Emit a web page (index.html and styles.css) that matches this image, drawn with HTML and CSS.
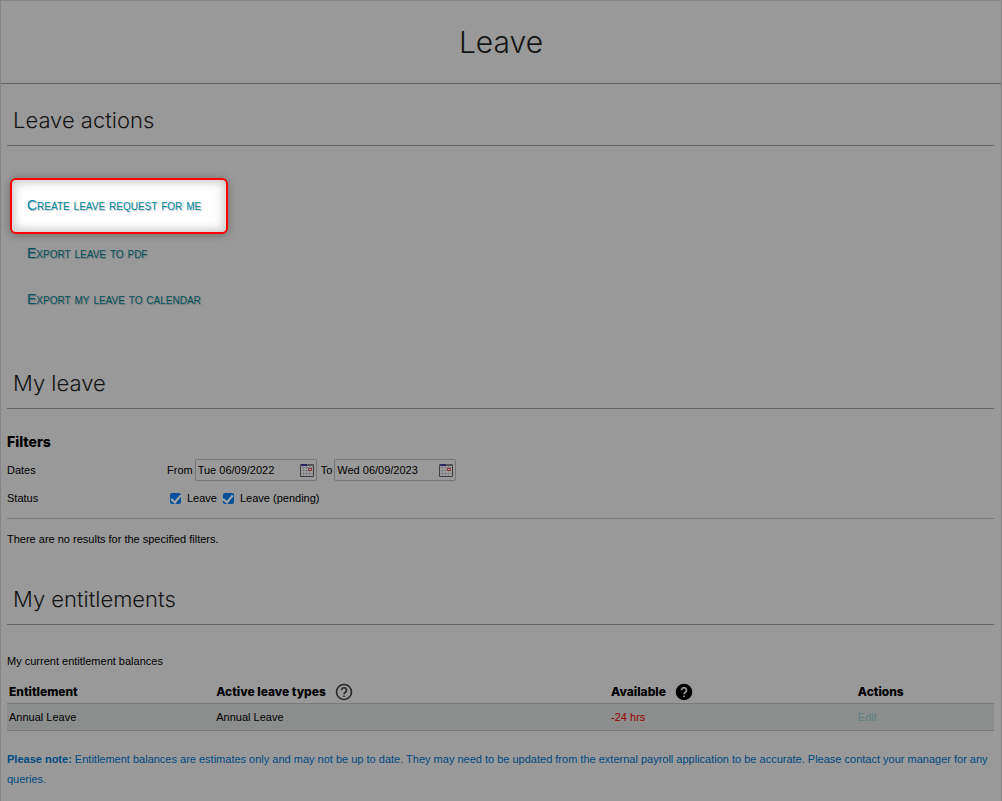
FILE: index.html
```html
<!DOCTYPE html>
<html lang="en">
<head>
    <meta charset="UTF-8">
    <title>Leave</title>
    <link rel="stylesheet" href="styles.css">
</head>
<body>
<div class="page">
    <header class="page-header">
        <h1>Leave</h1>
    </header>

    <main class="content">
        <section>
            <h2>Leave actions</h2>
            <ul class="actions">
                <li class="highlight"><a href="#">Create leave request for me</a></li>
                <li><a href="#">Export leave to pdf</a></li>
                <li><a href="#">Export my leave to calendar</a></li>
            </ul>
        </section>

        <section class="my-leave">
            <h2>My leave</h2>
            <form class="filters">
                <h3>Filters</h3>
                <div class="filter-row">
                    <span class="filter-name">Dates</span>
                    <label for="from">From</label>
                    <span class="date-box">
                        <input type="text" id="from" value="Tue 06/09/2022">
                        <button type="button" aria-label="Pick from date">
                            <svg width="14" height="13" viewBox="0 0 14 13">
                                <path d="M0 0h14v13H0z" fill="#a09fa1"/>
                                <path d="M1 3.5h12M1 6.5h12M1 9.5h12M3.5 2v10M6.5 2v10M9.5 2v10" stroke="#858387"/>
                                <path d="M.5 0v12.500h13V0" fill="none" stroke="#3f3c40"/>
                                <path d="M0 1h14" stroke="#555" stroke-width="2"/>
                                <path d="M1 1h6" stroke="#29295f" stroke-width="2"/>
                                <path d="M8.500 4.500h3v2h-3z" fill="#aaa" stroke="#8b2c2c"/>
                            </svg>
                        </button>
                    </span>
                    <label for="to">To</label>
                    <span class="date-box">
                        <input type="text" id="to" value="Wed 06/09/2023">
                        <button type="button" aria-label="Pick to date">
                            <svg width="14" height="13" viewBox="0 0 14 13">
                                <path d="M0 0h14v13H0z" fill="#a09fa1"/>
                                <path d="M1 3.5h12M1 6.5h12M1 9.5h12M3.5 2v10M6.5 2v10M9.5 2v10" stroke="#858387"/>
                                <path d="M.5 0v12.500h13V0" fill="none" stroke="#3f3c40"/>
                                <path d="M0 1h14" stroke="#555" stroke-width="2"/>
                                <path d="M1 1h6" stroke="#29295f" stroke-width="2"/>
                                <path d="M8.500 4.500h3v2h-3z" fill="#aaa" stroke="#8b2c2c"/>
                            </svg>
                        </button>
                    </span>
                </div>
                <div class="filter-row status-row">
                    <span class="filter-name">Status</span>
                    <input type="checkbox" id="leave" checked>
                    <label for="leave">Leave</label>
                    <input type="checkbox" id="pending" checked>
                    <label for="pending">Leave (pending)</label>
                </div>
            </form>
            <p class="results">There are no results for the specified filters.</p>
        </section>

        <section class="my-entitlements">
            <h2>My entitlements</h2>
            <table class="balances">
                <caption>My current entitlement balances</caption>
                <thead>
                <tr>
                    <th class="col-entitlement">Entitlement</th>
                    <th class="col-types">
                        <div class="with-help">Active leave types
                            <svg width="18" height="18" viewBox="0 0 18 18">
                                <circle cx="9" cy="9" r="7.500" fill="none" stroke="#262626" stroke-width="1.600"/>
                                <path d="M6.500 7.200a2.500 2.500 0 1 1 3.900 2.100C9.400 10 9 10.300 9 11.300" fill="none" stroke="#262626" stroke-width="1.600"/>
                                <path d="M8.200 12.400h1.600V14H8.200z" fill="#262626"/>
                            </svg>
                        </div>
                    </th>
                    <th class="col-available">
                        <div class="with-help">Available
                            <svg width="18" height="18" viewBox="0 0 18 18">
                                <circle cx="9" cy="9" r="8.300" fill="#000"/>
                                <path d="M6.500 7.200a2.500 2.500 0 1 1 3.900 2.100C9.400 10 9 10.300 9 11.300" fill="none" stroke="#999" stroke-width="1.700"/>
                                <path d="M8.200 12.600h1.600v1.600H8.200z" fill="#999"/>
                            </svg>
                        </div>
                    </th>
                    <th>Actions</th>
                </tr>
                </thead>
                <tbody>
                <tr>
                    <td>Annual Leave</td>
                    <td>Annual Leave</td>
                    <td class="negative">-24 hrs</td>
                    <td><a href="#">Edit</a></td>
                </tr>
                </tbody>
            </table>
            <p class="note"><strong>Please note:</strong> Entitlement balances are estimates only and may not be up to date. They may need to be updated from the external payroll application to be accurate. Please contact your manager for any queries.</p>
        </section>
    </main>
</div>
</body>
</html>
```
FILE: styles.css
```css
* {
    box-sizing: border-box;
}
body {
    margin: 0;
    background: #999;
    color: #000;
    font-family: "Liberation Sans", Arial, sans-serif;
    font-size: 11px;
    line-height: 20px;
}
.page {
    min-height: 100vh;
    border: 1px solid #858585;
    border-bottom: 0;
}
.page-header {
    padding: 21px 0;
    border-bottom: 1px solid #666;
    text-align: center;
}
h1, h2 {
    margin: 0;
    color: #141414;
    font-family: Inter, sans-serif;
    font-weight: 300;
}
h1 {
    font-size: 30px;
    line-height: 40px;
}
h2 {
    padding: 20px 6px 9px;
    border-bottom: 1px solid #666;
    font-size: 22px;
    line-height: 32px;
}
.content {
    padding: 0 7px 0 6px;
}

/* actions */
.actions {
    margin: 0;
    padding: 32px 3px 0;
    list-style: none;
}
.actions li {
    width: fit-content;
    padding: 8px 17px;
    line-height: 30px;
}
.actions .highlight {
    padding: 10px 25px 11px 15px;
    border: 2px solid #f00;
    border-radius: 6px;
    background: #fff;
    box-shadow: 0 1px 8px rgba(0, 0, 0, .3), inset 0 0 8px 3px #ccc;
}
.actions .highlight + li {
    padding: 4px 17px 7px;
}
.actions a {
    color: #00525f;
    font-size: 14px;
    font-variant: small-caps;
    text-decoration: none;
    text-shadow: 1px 1px 1px #777;
}
.actions .highlight a {
    color: #008ba3;
    text-shadow: 1px 1px 1px #bbb;
}

/* filters */
.my-leave {
    padding-top: 24px;
}
.filters {
    padding: 23px 0 10px;
    border-bottom: 1px solid #7a7a7a;
}
h3 {
    margin: 0;
    font-family: Inter, sans-serif;
    font-size: 14px;
    font-weight: 800;
    line-height: 20px;
}
.filter-row {
    display: flex;
    align-items: center;
    height: 36px;
}
.status-row {
    height: 20px;
}
.filter-name {
    width: 160px;
}
.date-box {
    display: flex;
    align-items: center;
    justify-content: space-between;
    width: 122px;
    height: 22px;
    margin: 0 4px 0 2px;
    padding: 0 2px;
    border: 1px solid #777;
    border-radius: 2px;
}
.date-box input {
    width: 90px;
    padding: 0;
    border: 0;
    background: none;
    color: #000;
    font: inherit;
}
.date-box button {
    display: flex;
    padding: 0;
    border: 0;
    background: none;
}
.status-row input {
    appearance: none;
    display: flex;
    justify-content: center;
    width: 11px;
    height: 11px;
    margin: 0 6px 0 3px;
    border-radius: 2px;
    background: #07509b;
}
.status-row input:checked::after {
    content: "";
    width: 4px;
    height: 8px;
    border: solid #aaa;
    border-width: 0 2px 2px 0;
    transform: rotate(40deg);
}
.status-row label {
    margin-right: 3px;
}
.results {
    margin: 0;
    padding: 10px 0;
}

/* entitlements */
.my-entitlements {
    padding-top: 4px;
}
.balances {
    width: 100%;
    border-collapse: collapse;
}
.balances caption {
    padding: 26px 0 9px;
    text-align: left;
}
.balances th {
    padding: 0 2px;
    font-family: Inter, sans-serif;
    font-size: 12px;
    font-weight: 800;
    line-height: 23px;
    text-align: left;
}
.balances td {
    padding: 3px 2px;
    border: solid #777b7a;
    border-width: 1px 0;
    background: #8c8e8d;
}
.col-entitlement {
    width: 21%;
}
.col-types {
    width: 40%;
}
.col-available {
    width: 25%;
}
.with-help {
    display: flex;
    align-items: center;
    gap: 9px;
}
.balances .negative {
    color: #990000;
}
.balances a {
    color: #5d7f86;
    text-decoration: none;
}
.note {
    margin: 0;
    padding: 18px 0;
    color: #004a82;
}
```
